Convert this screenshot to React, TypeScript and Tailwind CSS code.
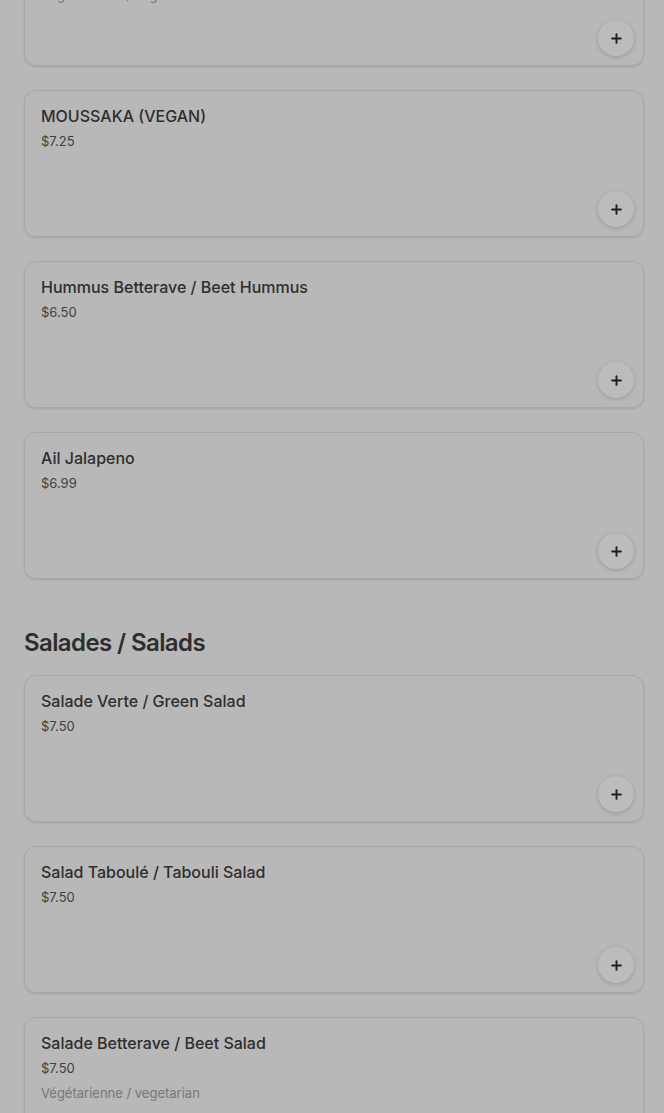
import { Plus } from "lucide-react";

interface Item {
    name: string;
    price: string;
    description?: string;
}

const firstSection: Item[] = [
    { name: "Feuilles de Vigne / Vine Leaves", price: "$6.50", description: "Végétarienne / vegetarian" },
    { name: "MOUSSAKA (VEGAN)", price: "$7.25" },
    { name: "Hummus Betterave / Beet Hummus", price: "$6.50" },
    { name: "Ail Jalapeno", price: "$6.99" },
];

const salads: Item[] = [
    { name: "Salade Verte / Green Salad", price: "$7.50" },
    { name: "Salad Taboulé / Tabouli Salad", price: "$7.50" },
    { name: "Salade Betterave / Beet Salad", price: "$7.50", description: "Végétarienne / vegetarian" },
];

const ItemCard = ({ item }: { item: Item }) => (
    <div className="flex flex-col h-[147px] rounded-xl border border-[#a8a8a8] shadow-[0_1px_2px_rgba(0,0,0,0.12)] pl-4 pr-[9px] pt-[14px] pb-[9px]">
        <span className="text-[16px] leading-[22px] font-medium text-[#2e2e2e]">{item.name}</span>
        <span className="text-[13px] leading-[18px] mt-[5px] text-[#404040]">{item.price}</span>
        {item.description && (
            <span className="text-[13px] leading-[18px] mt-[7px] text-[#777777]">{item.description}</span>
        )}
        <button className="mt-auto self-end w-9 h-9 rounded-full bg-[#bcbcbc] shadow-[0_1px_4px_rgba(0,0,0,0.18)] flex items-center justify-center">
            <Plus size={15} strokeWidth={3} className="text-[#1f1f1f]" />
        </button>
    </div>
);

export default function App() {
    return (
        <div className="min-h-screen bg-[#b8b8b8] overflow-hidden" style={{ fontFamily: "Inter, 'Noto Sans', sans-serif" }}>
            <div className="pl-6 pr-5 -mt-[81px] flex flex-col">
                <div className="flex flex-col gap-6">
                    {firstSection.map((item) => (
                        <ItemCard key={item.name} item={item} />
                    ))}
                </div>
                <h2 className="mt-[49px] mb-[17px] text-[24px] leading-[30px] font-semibold tracking-[-0.6px] text-[#2e2e2e]">
                    Salades / Salads
                </h2>
                <div className="flex flex-col gap-6">
                    {salads.map((item) => (
                        <ItemCard key={item.name} item={item} />
                    ))}
                </div>
            </div>
        </div>
    );
}
